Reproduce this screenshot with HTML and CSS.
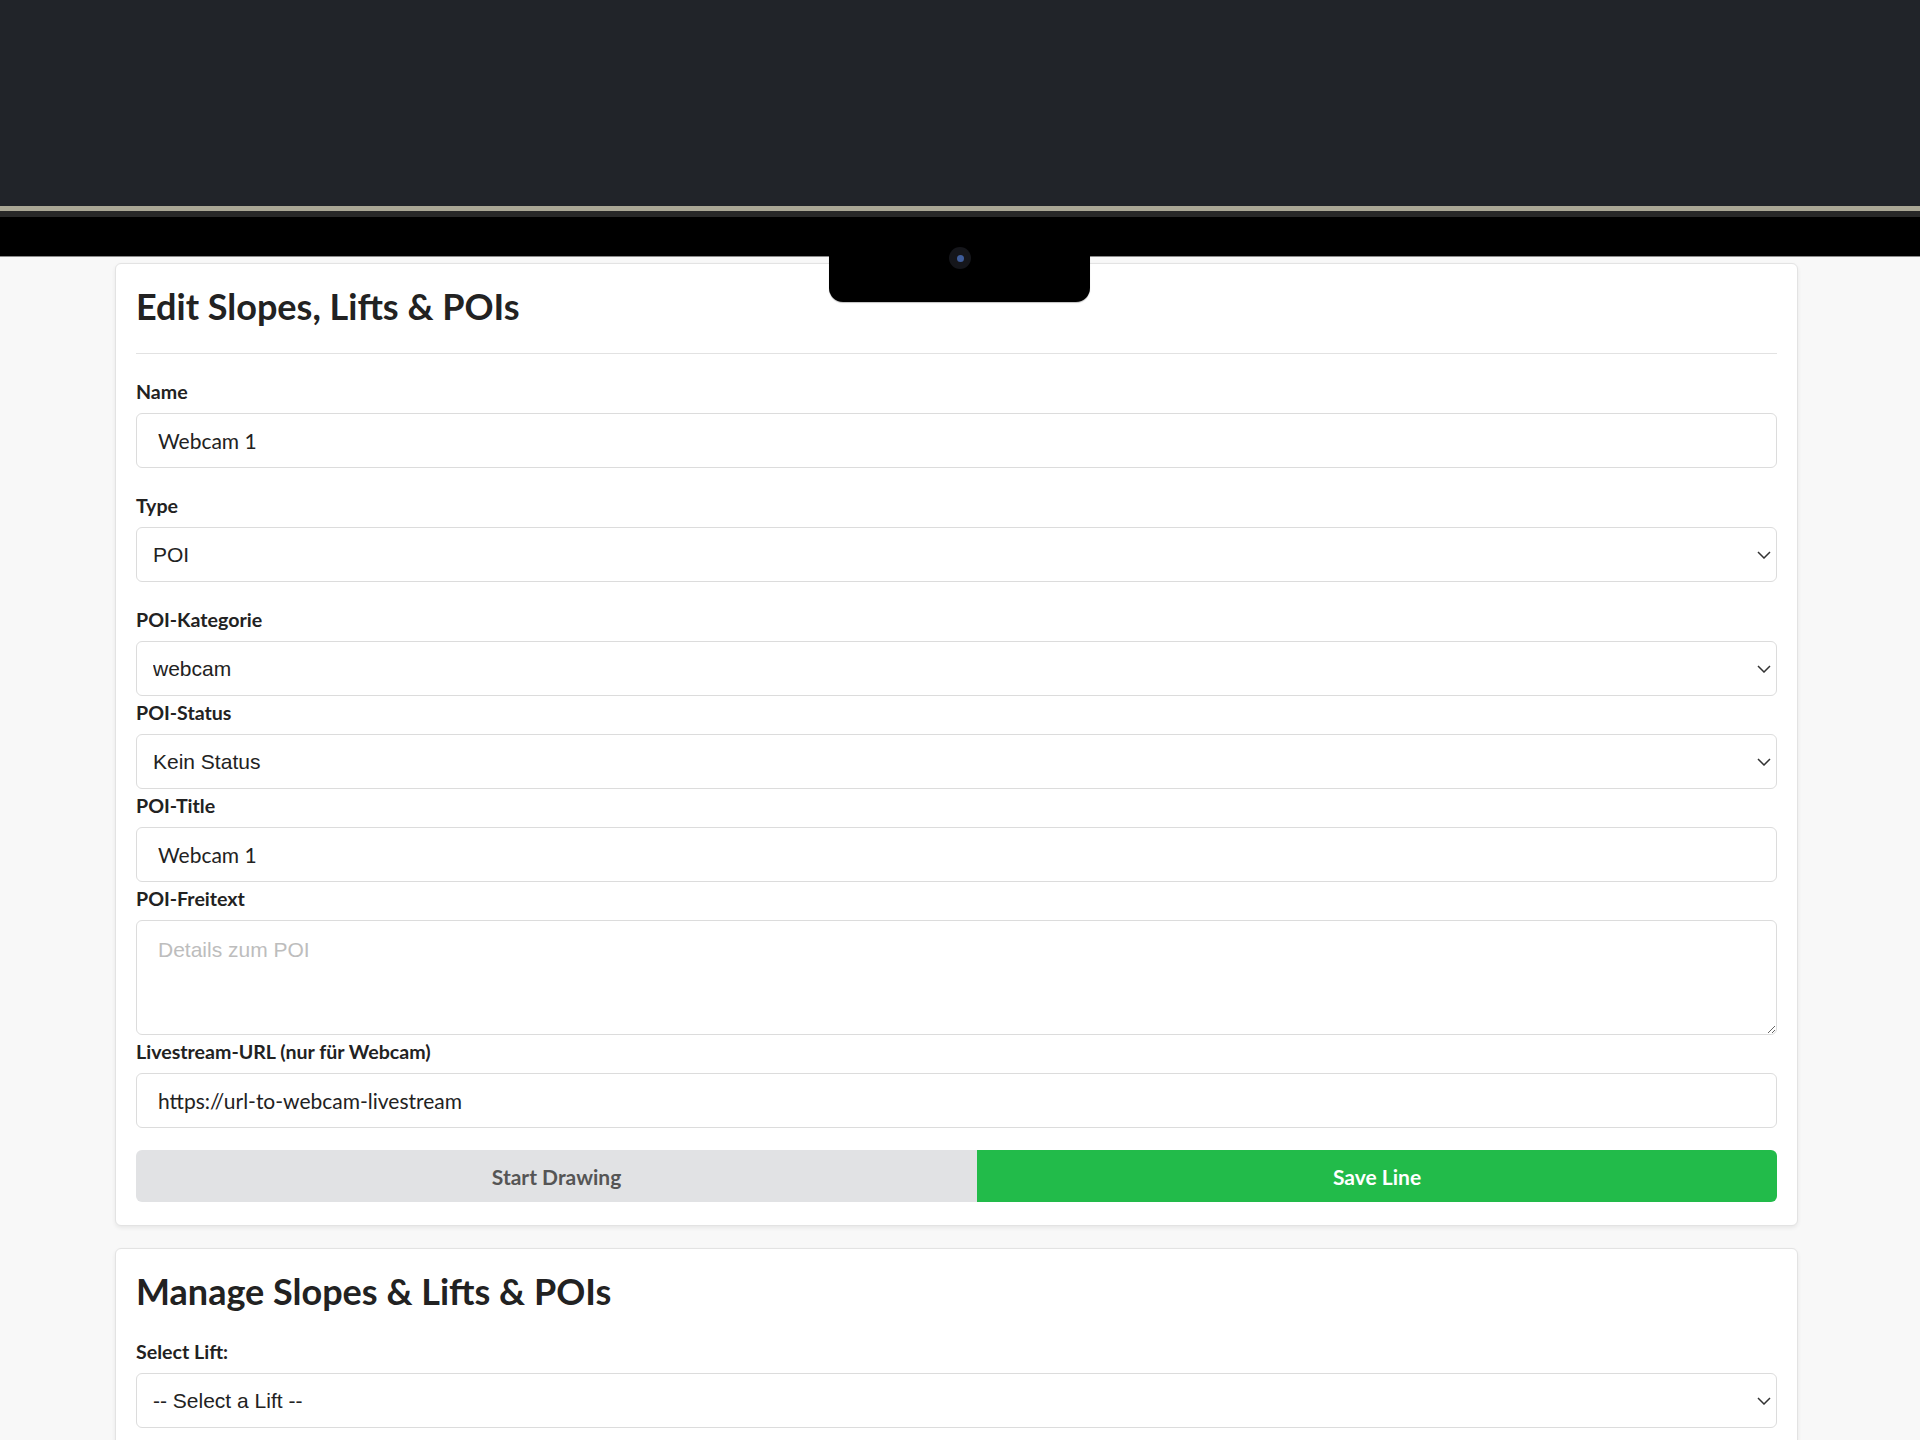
FILE: index.html
```html
<!DOCTYPE html>
<html lang="de">
<head>
<meta charset="utf-8">
<title>Edit Slopes, Lifts &amp; POIs</title>
<link rel="stylesheet" href="styles.css">
</head>
<body>
<header class="device">
  <div class="topbar"></div>
  <div class="stripe"></div>
  <div class="bezel"></div>
  <div class="notch"><span class="cam"><span class="lens"></span></span></div>
</header>
<main class="page">
  <section class="card">
    <h2 class="card-title divided">Edit Slopes, Lifts &amp; POIs</h2>
    <div class="group spaced">
      <label class="lbl" for="name">Name</label>
      <input class="ctl" id="name" type="text" value="Webcam 1">
    </div>
    <div class="group spaced">
      <label class="lbl" for="type">Type</label>
      <div class="sel-wrap">
        <select class="ctl sel" id="type"><option>POI</option></select>
        <svg class="chev" viewBox="0 0 14 8" width="14" height="8"><path d="M1 1l6 6 6-6" fill="none" stroke="#333" stroke-width="1.5"/></svg>
      </div>
    </div>
    <div class="group tight">
      <label class="lbl" for="cat">POI-Kategorie</label>
      <div class="sel-wrap">
        <select class="ctl sel" id="cat"><option>webcam</option></select>
        <svg class="chev" viewBox="0 0 14 8" width="14" height="8"><path d="M1 1l6 6 6-6" fill="none" stroke="#333" stroke-width="1.5"/></svg>
      </div>
    </div>
    <div class="group tight">
      <label class="lbl" for="status">POI-Status</label>
      <div class="sel-wrap">
        <select class="ctl sel" id="status"><option>Kein Status</option></select>
        <svg class="chev" viewBox="0 0 14 8" width="14" height="8"><path d="M1 1l6 6 6-6" fill="none" stroke="#333" stroke-width="1.5"/></svg>
      </div>
    </div>
    <div class="group tight">
      <label class="lbl" for="title">POI-Title</label>
      <input class="ctl" id="title" type="text" value="Webcam 1">
    </div>
    <div class="group tight">
      <label class="lbl" for="text">POI-Freitext</label>
      <textarea class="ctl area" id="text" placeholder="Details zum POI"></textarea>
    </div>
    <div class="group">
      <label class="lbl" for="url">Livestream-URL (nur für Webcam)</label>
      <input class="ctl" id="url" type="text" value="https://url-to-webcam-livestream">
    </div>
    <div class="btn-group">
      <button class="btn btn-gray" type="button">Start Drawing</button>
      <button class="btn btn-green" type="button">Save Line</button>
    </div>
  </section>
  <section class="card">
    <h2 class="card-title">Manage Slopes &amp; Lifts &amp; POIs</h2>
    <div class="group">
      <label class="lbl" for="lift">Select Lift:</label>
      <div class="sel-wrap">
        <select class="ctl sel" id="lift"><option>-- Select a Lift --</option></select>
        <svg class="chev" viewBox="0 0 14 8" width="14" height="8"><path d="M1 1l6 6 6-6" fill="none" stroke="#333" stroke-width="1.5"/></svg>
      </div>
    </div>
    <div class="filler"></div>
  </section>
</main>
</body>
</html>
```

FILE: styles.css
```css
html, body {
  margin: 0;
  padding: 0;
}
body {
  background: #f8f8f8;
  font-family: Lato, "Liberation Sans", sans-serif;
  color: #222;
  height: 1440px;
  overflow: hidden;
}
.device {
  position: relative;
}
.topbar {
  height: 206px;
  background: #212429;
}
.stripe {
  height: 5px;
  background: #aaa795;
}
.bezel {
  height: 39px;
  background: #000;
  border-top: 6px solid #282828;
  border-bottom: 1px solid #8a8a8a;
}
.notch {
  position: absolute;
  left: 829px;
  top: 217px;
  width: 261px;
  height: 85px;
  background: #000;
  border-radius: 0 0 14px 14px;
  box-shadow: 0 1px 1px rgba(0, 0, 0, 0.25);
  z-index: 2;
}
.cam {
  position: absolute;
  left: 120px;
  top: 30px;
  width: 22px;
  height: 22px;
  border-radius: 50%;
  background: #15161b;
  display: flex;
  align-items: center;
  justify-content: center;
}
.lens {
  width: 7px;
  height: 7px;
  border-radius: 50%;
  background: #3e5c99;
}
.page {
  padding: 6px 122px 0 115px;
  display: flex;
  flex-direction: column;
  gap: 22px;
}
.card {
  background: #fff;
  border: 1px solid #e3e3e3;
  border-radius: 6px;
  box-shadow: 0 2px 4px rgba(0, 0, 0, 0.07);
  padding: 20px 20px 23px;
}
.card-title {
  margin: 0 0 24px;
  font-size: 36px;
  font-weight: 700;
  line-height: 45px;
  color: #222;
}
.card-title.divided {
  padding-bottom: 24px;
  border-bottom: 1px solid #e2e2e2;
}
.group {
  display: flex;
  flex-direction: column;
}
.group.spaced {
  margin-bottom: 24px;
}
.group.tight {
  margin-bottom: 3px;
}
.lbl {
  font-size: 19.6px;
  font-weight: 700;
  line-height: 28px;
  margin-bottom: 7px;
  color: #222;
}
.ctl {
  box-sizing: border-box;
  width: 100%;
  height: 55px;
  border: 1px solid #dcdcdc;
  border-radius: 6px;
  background: #fff;
  color: #222;
  font-family: Lato, "Liberation Sans", sans-serif;
  font-size: 21px;
  padding: 0 20px 0 21px;
  margin: 0;
  outline: none;
}
.sel-wrap {
  position: relative;
}
.sel {
  appearance: none;
  -webkit-appearance: none;
  font-family: "Liberation Sans", Arial, sans-serif;
  padding: 0 40px 0 16px;
}
.chev {
  position: absolute;
  right: 6px;
  top: 24px;
  pointer-events: none;
}
.area {
  height: 115px;
  padding: 13px 20px 11px 21px;
  font-family: "Liberation Sans", Arial, sans-serif;
  line-height: 31px;
  resize: vertical;
  display: block;
}
.area::placeholder {
  color: #bdbdbd;
}
.btn-group {
  display: flex;
  margin-top: 22px;
}
.btn {
  flex: 1 1 auto;
  height: 52px;
  border: none;
  font-family: Lato, "Liberation Sans", sans-serif;
  font-size: 21px;
  font-weight: 700;
  padding: 0 20px;
  margin: 0;
}
.btn-gray {
  background: #e1e2e4;
  color: #555;
  border-radius: 6px 0 0 6px;
}
.btn-green {
  background: #22bb4a;
  color: #fff;
  border-radius: 0 6px 6px 0;
}
.filler {
  height: 200px;
}
```
